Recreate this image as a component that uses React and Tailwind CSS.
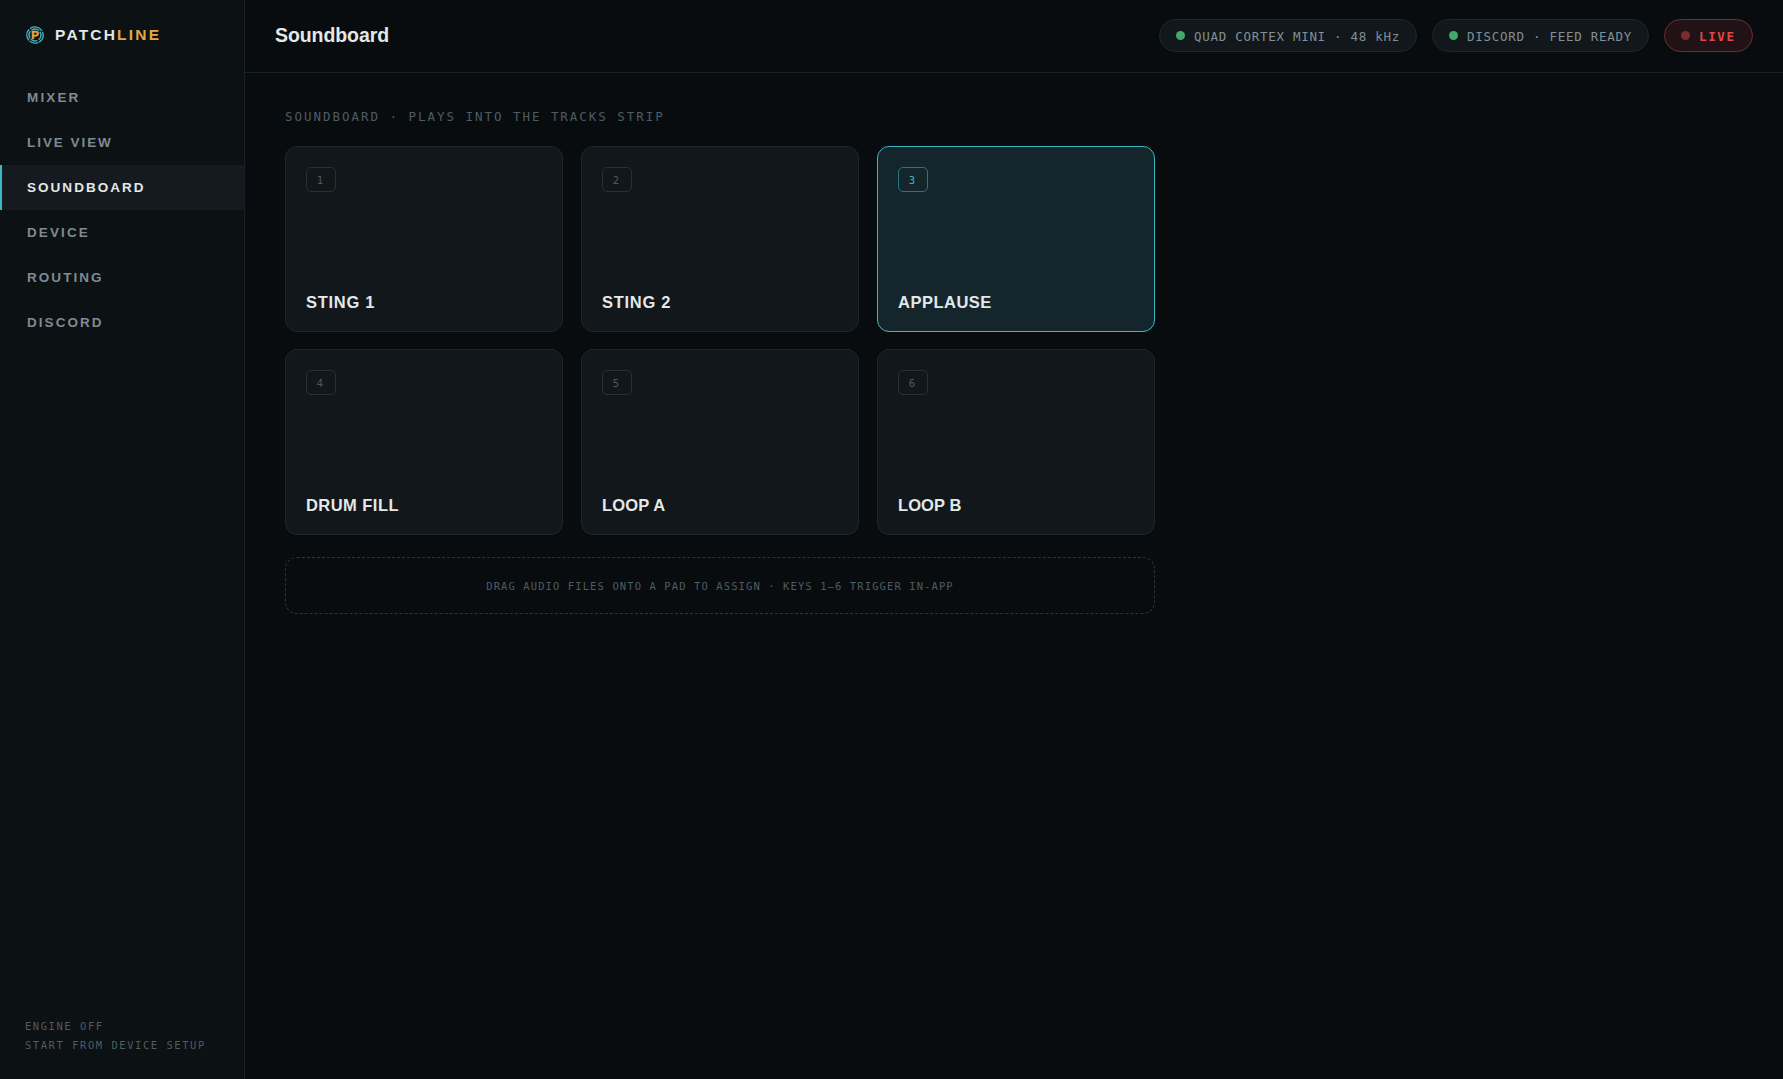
const NAV = [
  { label: "MIXER", spacing: "tracking-[2.15px]" },
  { label: "LIVE VIEW", spacing: "tracking-[1.95px]" },
  { label: "SOUNDBOARD", spacing: "tracking-[2.04px]", active: true },
  { label: "DEVICE", spacing: "tracking-[2.1px]" },
  { label: "ROUTING", spacing: "tracking-[2.05px]" },
  { label: "DISCORD", spacing: "tracking-[2.05px]" },
];

const PADS = [
  { label: "STING 1", spacing: "tracking-[0.72px]" },
  { label: "STING 2", spacing: "tracking-[0.7px]" },
  { label: "APPLAUSE", spacing: "tracking-[0.5px]", active: true },
  { label: "DRUM FILL", spacing: "tracking-[0.45px]" },
  { label: "LOOP A", spacing: "tracking-[0.15px]" },
  { label: "LOOP B", spacing: "tracking-[0.1px]" },
];

function Logo() {
  return (
    <svg className="size-[18px] shrink-0" viewBox="0 0 18 18" fill="none">
      <g stroke="#3fb5c4" strokeWidth="1.4" strokeLinecap="round">
        <path d="M4.6 2.2A8.1 8.1 0 0 1 15.6 4.4" />
        <path d="M16.7 6.4A8.1 8.1 0 0 1 13.4 15.8" />
        <path d="M11.8 16.6A8.1 8.1 0 0 1 4.2 15.5" />
        <path d="M2.6 14A8.1 8.1 0 0 1 2.8 3.8" />
        <path d="M5.8 4A5.9 5.9 0 0 1 12.6 4.3" />
        <path d="M14.1 6.1A5.9 5.9 0 0 1 12.9 13.4" />
        <path d="M10.8 14.6A5.9 5.9 0 0 1 5.2 13.5" />
        <path d="M3.9 12A5.9 5.9 0 0 1 4.1 5.7" />
      </g>
      <text
        x="9.2"
        y="13"
        textAnchor="middle"
        fill="#e8a93e"
        stroke="#e8a93e"
        strokeWidth="0.4"
        className="font-['Liberation_Sans',sans-serif] text-[11.5px] font-bold"
      >
        P
      </text>
    </svg>
  );
}

function StatusPill({ children }) {
  return (
    <div className="flex h-[33px] items-center gap-[9px] rounded-full border border-[#20272a] bg-[#11171a] px-4 text-[12.5px] tracking-[0.72px] text-[#819096]">
      <span className="size-[9px] rounded-full bg-[#43a86c]" />
      <span className="relative top-[1.5px]">{children}</span>
    </div>
  );
}

function Sidebar() {
  return (
    <aside className="flex w-[245px] shrink-0 flex-col border-r border-[#1b2125] bg-[#0c1113]">
      <div className="flex h-[75px] items-start gap-[11px] pt-[26px] pl-[26px]">
        <Logo />
        <span className="text-[15.5px] leading-[18px] font-bold tracking-[2.2px] text-[#e3e8e8]">
          PATCH<span className="text-[#e3a945]">LINE</span>
        </span>
      </div>
      <nav className="flex flex-col">
        {NAV.map((n) => (
          <a
            key={n.label}
            className={`flex h-[45px] items-center border-l-2 pt-[2px] pl-[25px] text-[13.5px] font-bold ${n.spacing} ${
              n.active ? "border-[#3fb5c4] bg-[#151a20] text-[#e3e8e8]" : "border-transparent text-[#7f8b90]"
            }`}
          >
            {n.label}
          </a>
        ))}
      </nav>
      <div className="mt-auto pb-[24px] pl-[25px] font-['DejaVu_Sans_Mono',monospace] text-[10.5px] leading-[19px] tracking-[1.54px] text-[#4d5c63]">
        <div>ENGINE OFF</div>
        <div>START FROM DEVICE SETUP</div>
      </div>
    </aside>
  );
}

function Pad({ index, label, spacing, active }) {
  return (
    <button
      className={`flex h-[186px] flex-col items-start justify-between rounded-xl border p-5 ${
        active ? "border-[#3fb5c4] bg-[#14262b]" : "border-[#20272a] bg-[#11171a]"
      }`}
    >
      <span
        className={`flex h-[25px] w-[30px] items-center justify-center rounded-[5px] border pt-[2px] pr-[2px] font-['DejaVu_Sans_Mono',monospace] text-[10.5px] ${
          active ? "border-[#297480] text-[#3fb5c4]" : "border-[#273035] text-[#4d5c63]"
        }`}
      >
        {index}
      </span>
      <span className={`text-[16.5px] leading-[18px] font-bold text-[#e3e8e8] ${spacing}`}>{label}</span>
    </button>
  );
}

export default function App() {
  return (
    <div className="flex h-screen w-full overflow-hidden bg-[#080c0f] font-['Liberation_Sans',Arial,sans-serif]">
      <Sidebar />
      <div className="flex flex-1 flex-col">
        <header className="flex h-[73px] items-center justify-between border-b border-[#1b2125] px-[30px] pb-px">
          <h1 className="text-[19.5px] font-bold tracking-[-0.08px] text-[#e3e8e8]">Soundboard</h1>
          <div className="flex gap-[15px] font-['DejaVu_Sans_Mono',monospace]">
            <StatusPill>QUAD CORTEX MINI · 48 kHz</StatusPill>
            <StatusPill>DISCORD · FEED READY</StatusPill>
            <button className="flex h-[33px] w-[89px] items-center gap-[9px] rounded-full border border-[#702e2f] bg-[#211315] px-4 text-[12.5px] font-bold tracking-[1.6px] text-[#e0484a]">
              <span className="size-[9px] shrink-0 rounded-full bg-[#762e31]" />
              <span className="relative top-[1.5px]">LIVE</span>
            </button>
          </div>
        </header>
        <main className="flex w-[950px] flex-col px-10 pt-[34px]">
          <h2 className="h-[39px] font-['DejaVu_Sans_Mono',monospace] text-[12.5px] leading-[20px] tracking-[1.97px] text-[#4d5c63]">
            SOUNDBOARD · PLAYS INTO THE TRACKS STRIP
          </h2>
          <div className="grid grid-cols-3 gap-x-[18px] gap-y-[17px]">
            {PADS.map((p, i) => (
              <Pad key={p.label} index={i + 1} {...p} />
            ))}
          </div>
          <div className="mt-[22px] flex h-[57px] items-center justify-center rounded-xl border border-dashed border-[#2b353a] font-['DejaVu_Sans_Mono',monospace] text-[10.5px] tracking-[1.1px] text-[#4d5c63]">
            <span className="relative top-px">DRAG AUDIO FILES ONTO A PAD TO ASSIGN · KEYS 1–6 TRIGGER IN-APP</span>
          </div>
        </main>
      </div>
    </div>
  );
}
